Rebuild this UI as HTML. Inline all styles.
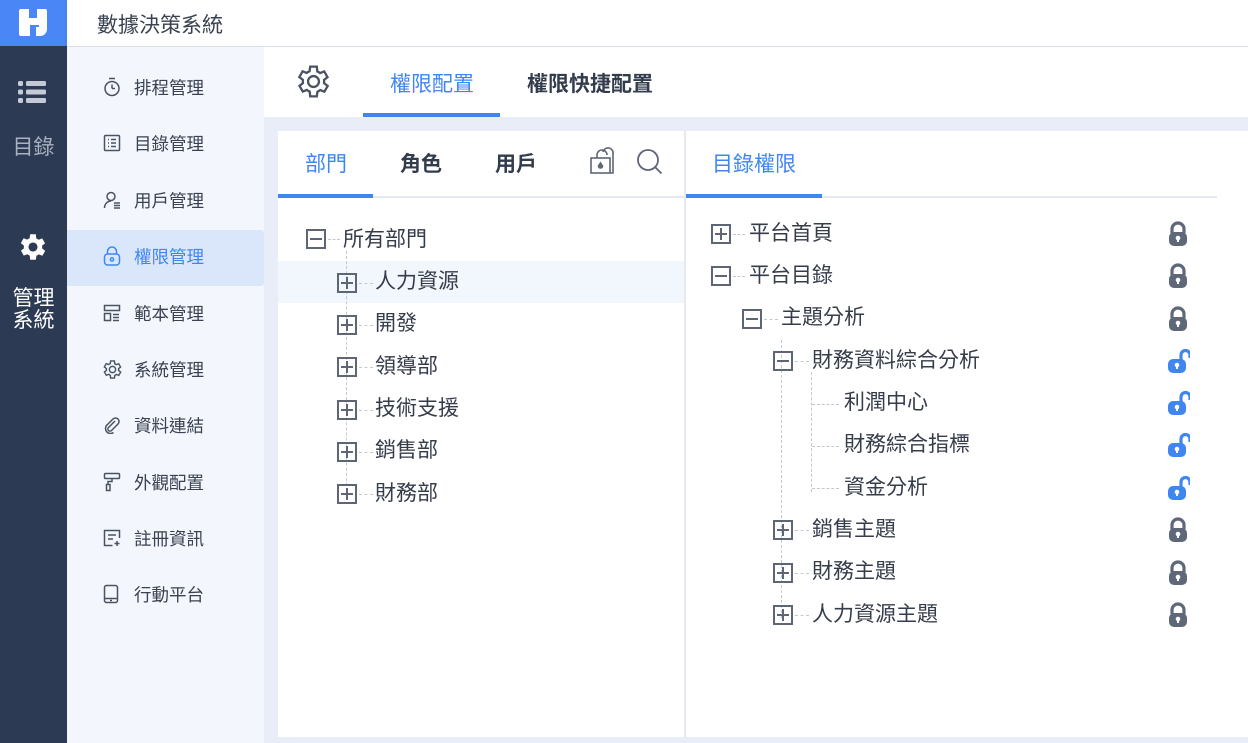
<!DOCTYPE html>
<html><head><meta charset="utf-8"><style>
*{margin:0;padding:0;box-sizing:border-box}
body{width:1248px;height:743px;overflow:hidden;position:relative;background:#e8edf7;font-family:"Liberation Sans","Noto Sans CJK TC",sans-serif;color:#333c4c}
.a{position:absolute}
.t{position:absolute;font-size:21px;line-height:26px;white-space:nowrap;color:#353c4a}
.box{position:absolute;width:20px;height:20px;border:2px solid #5e6676}
.box:before{content:"";position:absolute;left:2px;right:2px;top:7px;height:2px;background:#5e6676}
.box.p:after{content:"";position:absolute;top:2px;bottom:2px;left:7px;width:2px;background:#5e6676}
.dh{position:absolute;height:0;border-top:1.5px dashed #c4c8d0}
.dv{position:absolute;width:0;border-left:1.5px dashed #c4c8d0}
.nav{position:absolute;left:67px;width:197px;height:56px;display:flex;align-items:center;font-size:17.5px;color:#3a4150}
.nav svg{position:absolute;left:36px}
.nav span{position:absolute;left:67px}
</style></head><body>
<div class="a" style="left:0;top:0;width:67px;height:743px;background:#2c3a53"></div>
<div class="a" style="left:0;top:0;width:67px;height:46px;background:#4a86f6"></div>
<svg class="a" style="left:17px;top:7px" width="32" height="31" viewBox="0 0 32 31"><path d="M2 4a2 2 0 0 1 2-2h8v9h8V2h8a2 2 0 0 1 2 2v18c0 4-3 7-7 7h-4v-9h3v-2h-9v11H4a2 2 0 0 1-2-2z" fill="#fff"/></svg>
<svg class="a" style="left:18px;top:81px" width="28" height="22" viewBox="0 0 28 22" fill="#c5cbd6"><rect x="0" y="0" width="5" height="5" rx="1.5"/><rect x="8" y="0" width="20" height="5" rx="1.5"/><rect x="0" y="8.5" width="5" height="5" rx="1.5"/><rect x="8" y="8.5" width="20" height="5" rx="1.5"/><rect x="0" y="17" width="5" height="5" rx="1.5"/><rect x="8" y="17" width="20" height="5" rx="1.5"/></svg>
<div class="a" style="left:0;width:67px;top:131px;text-align:center;font-size:21px;color:#aab2c0">目錄</div>
<svg class="a" style="left:16px;top:230px" width="34" height="34" viewBox="0 0 24 24"><path fill="#fff" fill-rule="evenodd" d="M19.4 13a7.5 7.5 0 0 0 0-2l2.1-1.6-2-3.5-2.5 1a7 7 0 0 0-1.7-1L15 3h-4l-.4 2.8a7 7 0 0 0-1.7 1l-2.5-1-2 3.5L6.6 11a7.5 7.5 0 0 0 0 2l-2.1 1.6 2 3.5 2.5-1a7 7 0 0 0 1.7 1L11 21h4l.4-2.8a7 7 0 0 0 1.7-1l2.5 1 2-3.5zM13 15.2A3.2 3.2 0 1 1 13 8.8a3.2 3.2 0 0 1 0 6.4z" transform="translate(-1 0)"/></svg>
<div class="a" style="left:0;width:67px;top:288px;text-align:center;font-size:21px;line-height:22px;color:#fff">管理<br>系統</div>
<div class="a" style="left:67px;top:0;width:1181px;height:46px;background:#fff;box-shadow:0 2px 4px rgba(0,0,0,.08)"></div>
<div class="a" style="left:97px;top:9px;font-size:21px;color:#3a4150">數據決策系統</div>
<div class="a" style="left:67px;top:47px;width:197px;height:696px;background:#f3f6fd"></div>
<div class="a" style="left:67px;top:230px;width:197px;height:56px;background:#dae7fa;border-radius:0 3px 3px 0"></div>
<div class="nav" style="top:59px"><svg width="18" height="20" viewBox="0 0 18 20" fill="none" stroke="#4b5363" stroke-width="1.5"><circle cx="9" cy="11.5" r="7"/><path d="M6 1.5h6M9 11.5V7.5M9 11.5h3"/></svg><span>排程管理</span></div>
<div class="nav" style="top:115px"><svg width="18" height="18" viewBox="0 0 18 18" fill="none" stroke="#4b5363" stroke-width="1.5"><rect x="1.5" y="1.5" width="15" height="15" rx="1"/><path d="M5 5.5h1M8 5.5h5M5 9h1M8 9h5M5 12.5h1M8 12.5h5"/></svg><span>目錄管理</span></div>
<div class="nav" style="top:172px"><svg width="18" height="18" viewBox="0 0 18 18" fill="none" stroke="#4b5363" stroke-width="1.5"><circle cx="8" cy="5.5" r="4"/><path d="M1.5 17c0-4 3-7 6.5-7M11 12h6M11 14.5h6M11 17h6"/></svg><span>用戶管理</span></div>
<div class="nav" style="top:228px;color:#3f86f0"><svg width="18" height="20" viewBox="0 0 18 20" fill="none" stroke="#3f86f0" stroke-width="1.5"><path d="M4.5 8V5.5a4.5 4.5 0 0 1 9 0V8"/><rect x="1.5" y="8" width="15" height="11" rx="3"/><circle cx="9" cy="13.5" r="1.6"/></svg><span>權限管理</span></div>
<div class="nav" style="top:285px"><svg width="18" height="18" viewBox="0 0 18 18" fill="none" stroke="#4b5363" stroke-width="1.5"><rect x="1.5" y="1.5" width="15" height="5"/><rect x="1.5" y="9.5" width="6" height="7"/><path d="M10 10.5h6M10 13.5h6M10 16.5h6"/></svg><span>範本管理</span></div>
<div class="nav" style="top:341px"><svg width="19" height="19" viewBox="2 2 20 20" fill="none" stroke="#4b5363" stroke-width="1.5"><path d="M19.4 13a7.5 7.5 0 0 0 0-2l2.1-1.6-2-3.5-2.5 1a7 7 0 0 0-1.7-1L15 3h-4l-.4 2.8a7 7 0 0 0-1.7 1l-2.5-1-2 3.5L6.6 11a7.5 7.5 0 0 0 0 2l-2.1 1.6 2 3.5 2.5-1a7 7 0 0 0 1.7 1L11 21h4l.4-2.8a7 7 0 0 0 1.7-1l2.5 1 2-3.5z" transform="translate(-1 0)"/><circle cx="12" cy="12" r="3.3"/></svg><span>系統管理</span></div>
<div class="nav" style="top:397px"><svg width="18" height="18" viewBox="0 0 18 18" fill="none" stroke="#4b5363" stroke-width="1.5"><path d="M12 5l-6.5 6.5a2 2 0 0 0 3 3L15 8a3.5 3.5 0 0 0-5-5L3.5 9.5a5 5 0 0 0 7 7"/></svg><span>資料連結</span></div>
<div class="nav" style="top:454px"><svg width="18" height="20" viewBox="0 0 18 20" fill="none" stroke="#4b5363" stroke-width="1.5"><rect x="1.5" y="1.5" width="15" height="5" rx="1"/><path d="M9 6.5v3H5v3"/><rect x="3.5" y="12.5" width="3.5" height="6"/></svg><span>外觀配置</span></div>
<div class="nav" style="top:510px"><svg width="18" height="18" viewBox="0 0 18 18" fill="none" stroke="#4b5363" stroke-width="1.5"><path d="M16.5 9V1.5h-15v15h8"/><path d="M5 6h8M5 10h5M14 12v5M11.5 14.5h5"/></svg><span>註冊資訊</span></div>
<div class="nav" style="top:566px"><svg width="16" height="20" viewBox="0 0 16 20" fill="none" stroke="#4b5363" stroke-width="1.5"><rect x="1.5" y="1.5" width="13" height="17" rx="2"/><path d="M1.5 14.5h13M7 16.5h2"/></svg><span>行動平台</span></div>
<div class="a" style="left:264px;top:47px;width:984px;height:70px;background:#fff"></div>
<svg class="a" style="left:297px;top:65px" width="33" height="33" viewBox="2 2 20 20" fill="none" stroke="#4b5363" stroke-width="1.4"><path d="M19.4 13a7.5 7.5 0 0 0 0-2l2.1-1.6-2-3.5-2.5 1a7 7 0 0 0-1.7-1L15 3h-4l-.4 2.8a7 7 0 0 0-1.7 1l-2.5-1-2 3.5L6.6 11a7.5 7.5 0 0 0 0 2l-2.1 1.6 2 3.5 2.5-1a7 7 0 0 0 1.7 1L11 21h4l.4-2.8a7 7 0 0 0 1.7-1l2.5 1 2-3.5z" transform="translate(-1 0)"/><circle cx="12" cy="12" r="3.3"/></svg>
<div class="a" style="left:390px;top:68px;font-size:21px;color:#3f86f0">權限配置</div>
<div class="a" style="left:363px;top:113px;width:137px;height:4px;background:#3f86f0"></div>
<div class="a" style="left:527px;top:68px;font-size:21px;color:#333c4c;font-weight:bold">權限快捷配置</div>
<div class="a" style="left:278px;top:131px;width:406px;height:606px;background:#fff"></div>
<div class="a" style="left:305px;top:148px;font-size:21px;color:#3f86f0">部門</div>
<div class="a" style="left:400px;top:148px;font-size:21px;color:#333c4c;font-weight:bold">角色</div>
<div class="a" style="left:495px;top:148px;font-size:21px;color:#333c4c;font-weight:bold">用戶</div>
<svg class="a" style="left:589px;top:146px" width="30" height="30" viewBox="0 0 30 30" fill="none" stroke="#5e6676" stroke-width="1.6"><path d="M8 12V9a5 5 0 0 1 10 0M14 6a5 5 0 0 1 10 2v19h-3"/><rect x="2" y="12" width="19" height="15"/><path d="M11.5 17l-2 3a2 2 0 0 0 4 0z" fill="#5e6676"/></svg>
<svg class="a" style="left:636px;top:148px" width="28" height="28" viewBox="0 0 28 28" fill="none" stroke="#5e6676" stroke-width="1.8"><circle cx="12" cy="12" r="10"/><path d="M19.5 19.5l6 6"/></svg>
<div class="a" style="left:278px;top:196px;width:406px;height:2px;background:#e6e9ef"></div>
<div class="a" style="left:278px;top:194px;width:95px;height:4px;background:#3f86f0"></div>
<div class="a" style="left:278px;top:261px;width:406px;height:42px;background:#f2f6fd"></div>
<div class="box" style="left:306px;top:229px"></div><div class="dh" style="left:328px;width:12px;top:239px"></div><div class="t" style="left:343px;top:227px">所有部門</div>
<div class="dv" style="left:346px;top:251px;height:245px"></div>
<div class="box p" style="left:337px;top:273px"></div><div class="dh" style="left:359px;width:14px;top:283px"></div><div class="t" style="left:375px;top:269px">人力資源</div>
<div class="box p" style="left:337px;top:315px"></div><div class="dh" style="left:359px;width:14px;top:325px"></div><div class="t" style="left:375px;top:311px">開發</div>
<div class="box p" style="left:337px;top:357px"></div><div class="dh" style="left:359px;width:14px;top:367px"></div><div class="t" style="left:375px;top:354px">領導部</div>
<div class="box p" style="left:337px;top:400px"></div><div class="dh" style="left:359px;width:14px;top:410px"></div><div class="t" style="left:375px;top:396px">技術支援</div>
<div class="box p" style="left:337px;top:442px"></div><div class="dh" style="left:359px;width:14px;top:452px"></div><div class="t" style="left:375px;top:438px">銷售部</div>
<div class="box p" style="left:337px;top:484px"></div><div class="dh" style="left:359px;width:14px;top:494px"></div><div class="t" style="left:375px;top:481px">財務部</div>
<div class="a" style="left:686px;top:131px;width:562px;height:606px;background:#fff"></div>
<div class="a" style="left:684px;top:131px;width:2px;height:606px;background:#e6e9ef"></div>
<div class="a" style="left:712px;top:148px;font-size:21px;color:#3f86f0">目錄權限</div>
<div class="a" style="left:686px;top:196px;width:531px;height:2px;background:#e6e9ef"></div>
<div class="a" style="left:686px;top:194px;width:136px;height:4px;background:#3f86f0"></div>
<div class="box p" style="left:711px;top:224px"></div><div class="dh" style="left:733px;width:12px;top:234px"></div><div class="t" style="left:749px;top:221px">平台首頁</div>
<div class="box" style="left:711px;top:266px"></div><div class="dh" style="left:733px;width:12px;top:276px"></div><div class="t" style="left:749px;top:263px">平台目錄</div>
<div class="box" style="left:742px;top:309px"></div><div class="dh" style="left:764px;width:14px;top:319px"></div><div class="t" style="left:781px;top:305px">主題分析</div>
<div class="dv" style="left:781px;top:340px;height:278px"></div>
<div class="box" style="left:773px;top:351px"></div><div class="dh" style="left:795px;width:14px;top:361px"></div><div class="t" style="left:812px;top:348px">財務資料綜合分析</div>
<div class="dv" style="left:811px;top:372px;height:120px"></div>
<div class="dh" style="left:812px;width:27px;top:404px"></div><div class="t" style="left:844px;top:390px">利潤中心</div>
<div class="dh" style="left:812px;width:27px;top:446px"></div><div class="t" style="left:844px;top:432px">財務綜合指標</div>
<div class="dh" style="left:812px;width:27px;top:488px"></div><div class="t" style="left:844px;top:475px">資金分析</div>
<div class="box p" style="left:773px;top:520px"></div><div class="dh" style="left:795px;width:14px;top:530px"></div><div class="t" style="left:812px;top:517px">銷售主題</div>
<div class="box p" style="left:773px;top:563px"></div><div class="dh" style="left:795px;width:14px;top:573px"></div><div class="t" style="left:812px;top:559px">財務主題</div>
<div class="box p" style="left:773px;top:605px"></div><div class="dh" style="left:795px;width:14px;top:615px"></div><div class="t" style="left:812px;top:602px">人力資源主題</div>
<svg width="0" height="0" style="position:absolute"><defs>
<symbol id="lk" viewBox="0 0 22 26"><path d="M5 12V8a6 6 0 0 1 12 0v4" fill="none" stroke="#5f6878" stroke-width="3.2"/><rect x="2" y="11" width="18" height="14" rx="5" fill="#5f6878"/><circle cx="11" cy="17" r="2.3" fill="#fff"/><rect x="10" y="17" width="2" height="4" fill="#fff"/></symbol>
<symbol id="ul" viewBox="0 0 22 26"><path d="M13 12V7a4.5 4.5 0 0 1 9 0v3" fill="none" stroke="#3f86f0" stroke-width="3.2"/><rect x="0" y="11" width="18" height="14" rx="5" fill="#3f86f0"/><circle cx="9" cy="17" r="2.3" fill="#fff"/><rect x="8" y="17" width="2" height="4" fill="#fff"/></symbol>
</defs></svg>
<svg class="a" style="left:1167px;top:221px" width="22" height="26"><use href="#lk"/></svg>
<svg class="a" style="left:1167px;top:263px" width="22" height="26"><use href="#lk"/></svg>
<svg class="a" style="left:1167px;top:306px" width="22" height="26"><use href="#lk"/></svg>
<svg class="a" style="left:1168px;top:348px" width="22" height="26"><use href="#ul"/></svg>
<svg class="a" style="left:1168px;top:390px" width="22" height="26"><use href="#ul"/></svg>
<svg class="a" style="left:1168px;top:432px" width="22" height="26"><use href="#ul"/></svg>
<svg class="a" style="left:1168px;top:475px" width="22" height="26"><use href="#ul"/></svg>
<svg class="a" style="left:1167px;top:517px" width="22" height="26"><use href="#lk"/></svg>
<svg class="a" style="left:1167px;top:560px" width="22" height="26"><use href="#lk"/></svg>
<svg class="a" style="left:1167px;top:602px" width="22" height="26"><use href="#lk"/></svg>
</body></html>
